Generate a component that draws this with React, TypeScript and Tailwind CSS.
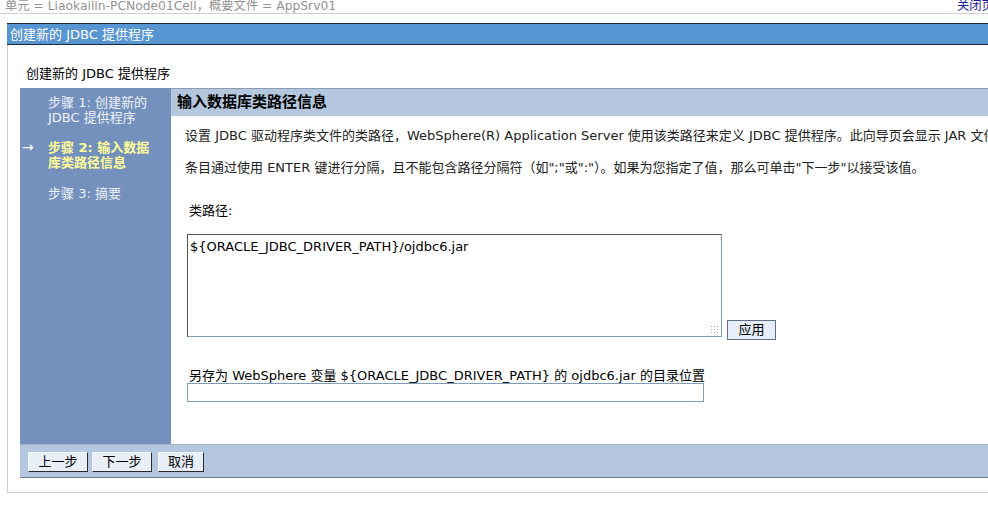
import React from "react";

const font = { fontFamily: '"DejaVu Sans", "Noto Sans CJK SC", sans-serif' };

function Btn({ w, children, className = "" }: { w: string; children: React.ReactNode; className?: string }) {
  return (
    <button
      className={`${w} h-[20px] bg-[#e8eff9] border border-[#f6f8fc] border-r-[#2a2a2a] border-b-[#2a2a2a] text-[13px] leading-[18px] text-black ${className}`}
    >
      {children}
    </button>
  );
}

export default function App() {
  return (
    <div className="w-[988px] h-[523px] bg-white overflow-hidden text-[13px] leading-[15px] text-black" style={font}>
      {/* top line */}
      <div className="h-[14px] border-b border-[#d0d0d0] flex items-start justify-between pl-[5px]">
        <span className="text-[#939393] text-[12.3px] leading-[12px] whitespace-nowrap">单元 = Liaokailin-PCNode01Cell，概要文件 = AppSrv01</span>
        <span className="text-[#1a1aa0] text-[12.3px] leading-[12px] whitespace-nowrap w-[31px] overflow-hidden">关闭页面</span>
      </div>
      <div className="pl-[7px] pt-[9px]">
        <div className="border-l border-b border-[#cfcfcf] h-[470px] flex flex-col">
          <div className="h-[22px] bg-[#5795d2] border-y border-[#1b2a3a] text-white flex items-center pl-[3px] -ml-px shrink-0">
            创建新的 JDBC 提供程序
          </div>
          <div className="pl-[18px] pt-[21px] h-[43px] shrink-0">创建新的 JDBC 提供程序</div>
          <div className="ml-[12px] flex flex-col h-[390px] border-b border-[#6b7f9c] shrink-0">
            <div className="flex flex-1">
              <div className="w-[151px] bg-[#7490bc] shrink-0 pt-[7px] text-[#eef2fa]">
                <div className="pl-[28px]">步骤 1: 创建新的<br />JDBC 提供程序</div>
                <div className="flex mt-[15px]">
                  <span className="w-[28px] pl-[2px] text-white text-[14px]">→</span>
                  <span className="text-[#ffff99] font-bold">步骤 2: 输入数据<br />库类路径信息</span>
                </div>
                <div className="pl-[28px] mt-[16px]">步骤 3: 摘要</div>
              </div>
              <div className="flex-1 flex flex-col">
                <div className="h-[28px] bg-[#b5c7df] border-t border-[#8a9bb3] flex items-center pl-[6px] font-bold text-[15px] shrink-0">
                  输入数据库类路径信息
                </div>
                <div className="flex-1 bg-white pl-[14px] pt-[12px]">
                  <div className="whitespace-nowrap text-[#222]">设置 JDBC 驱动程序类文件的类路径，WebSphere(R) Application Server 使用该类路径来定义 JDBC 提供程序。此向导页会显示 JAR 文件</div>
                  <div className="whitespace-nowrap text-[#222] mt-[17px]">条目通过使用 ENTER 键进行分隔，且不能包含路径分隔符（如";"或":"）。如果为您指定了值，那么可单击"下一步"以接受该值。</div>
                  <div className="pl-[4px] mt-[28px]">类路径:</div>
                  <div className="flex items-end mt-[16px] pl-[2px]">
                    <div className="w-[535px] h-[103px] border border-[#7f9db9] border-t-[#555] border-l-[#555] bg-white px-[2px] pt-[4px] relative">
                      ${"{"}ORACLE_JDBC_DRIVER_PATH{"}"}/ojdbc6.jar
                      <div
                        className="absolute right-[2px] bottom-[2px] w-[9px] h-[9px]"
                        style={{ backgroundImage: "radial-gradient(#a8a8a8 0.8px, transparent 0.9px)", backgroundSize: "3px 3px" }}
                      ></div>
                    </div>
                    <button className="ml-[5px] mb-[-3px] w-[49px] h-[20px] border border-[#5c6f8c] bg-[#e6eef9] text-[13px] leading-[18px]">应用</button>
                  </div>
                  <div className="pl-[4px] mt-[31px] whitespace-nowrap">另存为 WebSphere 变量 ${"{"}ORACLE_JDBC_DRIVER_PATH{"}"} 的 ojdbc6.jar 的目录位置</div>
                  <div className="ml-[2px] w-[517px] h-[19px] border border-[#7f9db9] bg-white"></div>
                </div>
              </div>
            </div>
            <div className="h-[33px] bg-[#b5c7df] border-t border-[#a4b4cc] shrink-0 flex items-start pt-[7px] pl-[8px]">
              <Btn w="w-[60px]">上一步</Btn>
              <Btn w="w-[60px]" className="ml-[4px]">下一步</Btn>
              <Btn w="w-[46px]" className="ml-[6px]">取消</Btn>
            </div>
          </div>
        </div>
      </div>
    </div>
  );
}
